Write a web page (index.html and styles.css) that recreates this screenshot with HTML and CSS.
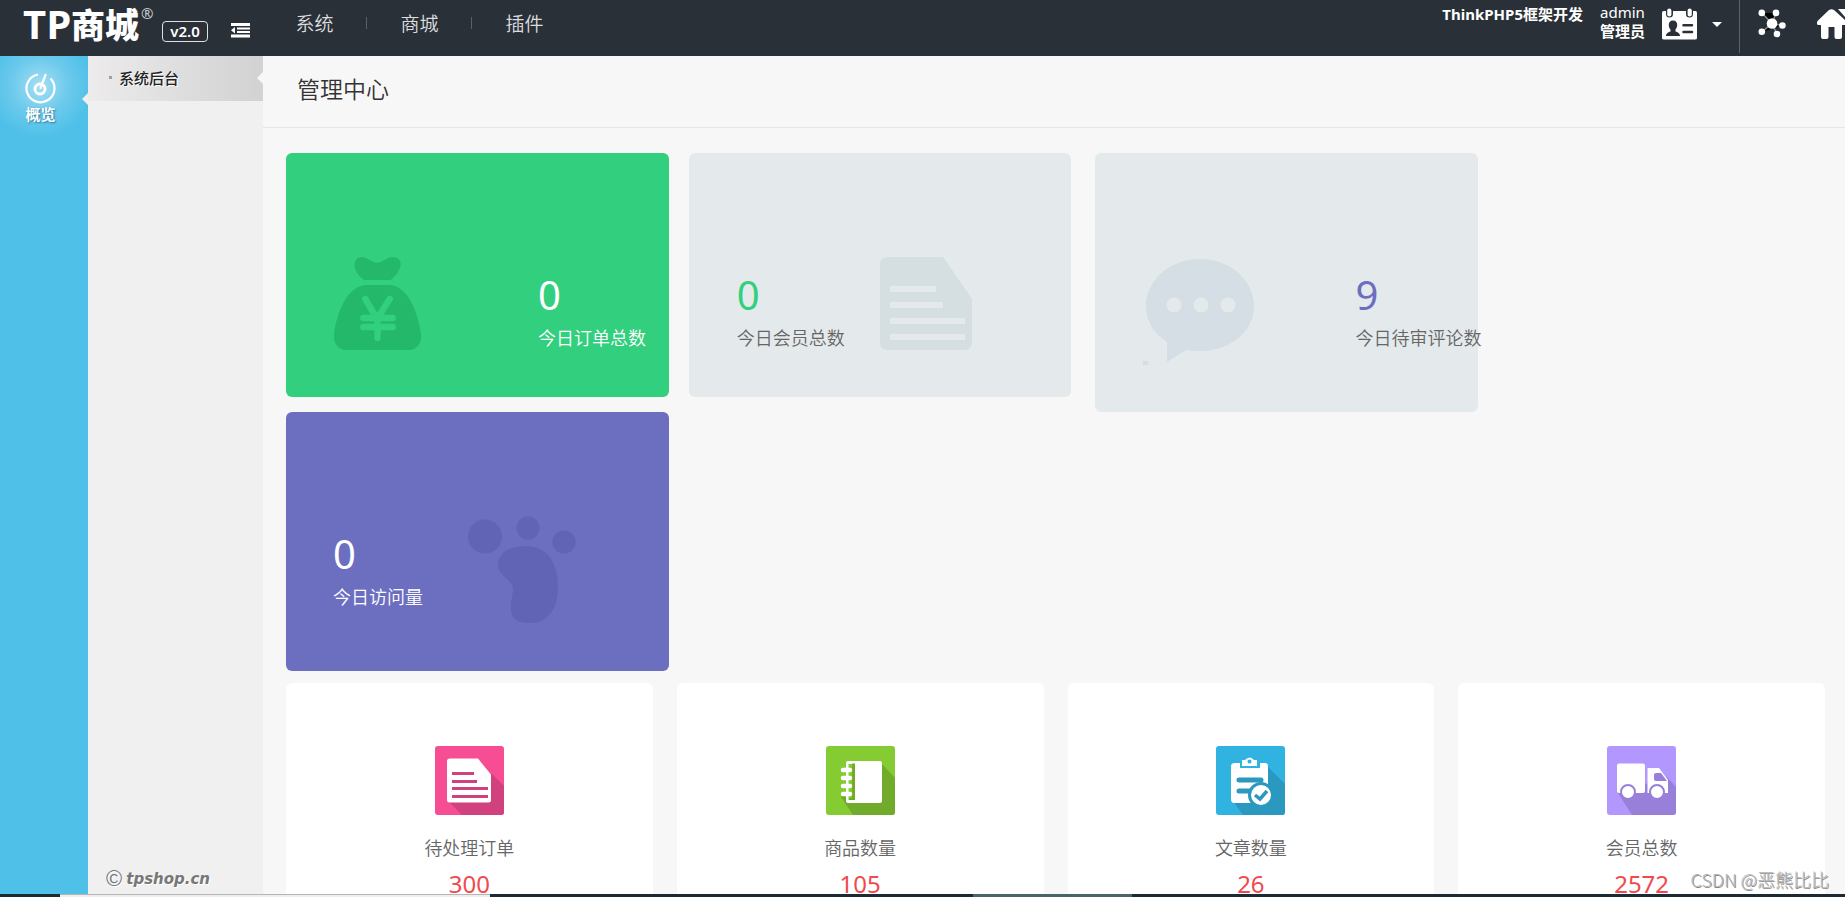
FILE: index.html
```html
<!DOCTYPE html>
<html lang="zh-CN">
<head>
<meta charset="utf-8">
<title>管理中心</title>
<link rel="stylesheet" href="styles.css">
</head>
<body>
<header class="topbar">
  <div class="brand">
    <span class="brand-tp">TP</span><span class="brand-cn">商城</span><span class="brand-reg">®</span>
    <span class="version">v2.0</span>
  </div>
  <button class="fold" type="button" aria-label="收起菜单">
    <svg width="19" height="15" viewBox="0 0 19 15" fill="#fff"><path d="M0 0h19v3H0zM6 4.500h13v2H6zM6 8h13v2H6zM0 11.500h19v3H0zM0 7.300 4 4v6.600z"/></svg>
  </button>
  <nav class="mainnav">
    <a href="#">系统</a><a href="#">商城</a><a href="#">插件</a>
  </nav>
  <div class="account">
    <strong class="framework">ThinkPHP5框架开发</strong>
    <div class="user"><span>admin</span><strong>管理员</strong></div>
    <button class="profile" type="button" aria-label="账户">
      <svg width="35" height="32" viewBox="0 0 35 32"><path fill="#fff" d="M1.500 3H4v3a3.500 3.500 0 0 0 7 0V3h13v3a3.500 3.500 0 0 0 7 0V3h2.500Q35 3 35 5v25q0 1.500-2 1.500H2Q0 31.500 0 30V5q0-2 1.500-2z"/><rect x="5.200" y="0.500" width="4.200" height="8" rx="2.100" fill="#fff"/><rect x="25.600" y="0.500" width="4.200" height="8" rx="2.100" fill="#fff"/><path fill="#2a3038" d="M11 12.500c3 0 4.500 2 4.200 5-.2 2-1 3-1.700 4v2c2 .8 4.500 1.500 4.500 4.500H4c0-3 2.500-3.700 4.500-4.500v-2c-.8-1-1.500-2-1.700-4-.3-3 1.200-5 4.200-5z"/><path stroke="#2a3038" stroke-width="2.500" stroke-linecap="round" d="M21.500 17.200h8.500M21.500 24h8.500"/></svg>
      <svg width="10" height="5" viewBox="0 0 10 5"><path fill="#fff" d="M0 0h10L5 5z"/></svg>
    </button>
  </div>
  <div class="tools">
    <button class="tool" type="button" aria-label="导航">
      <svg width="28" height="29" viewBox="0 0 28 29"><path stroke="#8d9298" stroke-width="1.300" d="M4 4l10 10.500L18 4M4 23l10-8.500 10 2M14 14.500 19 25"/><g fill="#fff"><circle cx="14" cy="14.500" r="5.300"/><circle cx="3.800" cy="3.900" r="3.300"/><circle cx="18" cy="3.900" r="3.300"/><circle cx="24.400" cy="16.500" r="3.300"/><circle cx="3.800" cy="22.800" r="3.300"/><circle cx="19" cy="25" r="3.300"/></g></svg>
    </button>
    <button class="tool" type="button" aria-label="首页">
      <svg width="30" height="31" viewBox="0 0 30 31" fill="#fff"><path d="M12 1q2.500-1.500 5 0l12 11q2 3-.5 4H25v12q0 2-2 2h-3.500q-2 0-2-2V18h-6v10q0 2-2 2H6q-2 0-2-2V16H1q-2-1-.5-4zM21 0h8v9z"/></svg>
    </button>
  </div>
</header>
<div class="workspace">
  <aside class="modules">
    <a class="module" href="#">
      <svg width="31" height="32" viewBox="0 0 31 32" fill="none" stroke="#fff"><path stroke-width="2.200" d="M13 2.500a14 14 0 1 0 12.500 4"/><circle cx="15" cy="17" r="5" stroke-width="2.800"/><path stroke-width="2.200" stroke-linecap="round" d="M15.500 16 20.500 3"/></svg>
      <span>概览</span>
    </a>
  </aside>
  <aside class="submenu">
    <a class="submenu-item" href="#">系统后台</a>
    <div class="copyright"><span class="copy-mark">©</span> <em>tpshop.cn</em></div>
  </aside>
  <main class="content">
    <h1 class="page-title">管理中心</h1>
    <div class="panel">
      <section class="stats">
        <article class="stat stat-orders">
          <div class="stat-lead">
            <svg width="88" height="94" viewBox="0 0 90 94" preserveAspectRatio="none"><g fill="#24b86b"><path d="M28 0c6 0 10 5 16 6 6-1 10-6 16-6 6 0 9 4 8 9-2 7-6 11-10 14H31c-5-3-9-8-10-14 0-5 2-9 7-9zM32 28h26c18 2 28 28 31 49 1 10-5 16-13 16H13C5 93-1 87 0 77 3 56 13 30 32 28z"/></g><path fill="none" stroke="#32cf7e" stroke-width="6.500" stroke-linecap="round" d="M32 42l12 20 13-20M44.500 60v21M30 61h30M30 70h30"/></svg>
          </div>
          <div class="stat-text"><b>0</b><span>今日订单总数</span></div>
        </article>
        <article class="stat stat-members">
          <div class="stat-lead stat-text"><b>0</b><span>今日会员总数</span></div>
          <svg width="92" height="94" viewBox="0 0 92 94"><path fill="#d5dee1" d="M8 0h55l29 42v43q0 8-8 8H8q-8 0-8-8V8q0-8 8-8z"/><path fill="#e4eaec" d="M10 29h46v6H10zM10 45h53v6H10zM10 61h75v6H10zM10 77h75v6H10z"/></svg>
        </article>
        <article class="stat stat-comments">
          <div class="stat-lead">
            <svg width="112" height="109" viewBox="0 0 112 109"><path fill="#d5dee4" d="M57 2c30 0 54 21 54 47S87 94 57 94q-7 0-14-1l-19 12V85C11 77 3 64 3 49 3 23 27 2 57 2zM0 104h5v4H0z"/><g fill="#e4eaec"><circle cx="31" cy="48" r="7.500"/><circle cx="58" cy="48" r="7.500"/><circle cx="85" cy="48" r="7.500"/></g></svg>
          </div>
          <div class="stat-text"><b>9</b><span>今日待审评论数</span></div>
        </article>
        <article class="stat stat-visits">
          <div class="stat-lead stat-text"><b>0</b><span>今日访问量</span></div>
          <svg width="109" height="109" viewBox="0 0 109 109" fill="#6163b5"><circle cx="17" cy="20.500" r="17"/><circle cx="60" cy="12" r="11.500"/><circle cx="96" cy="26" r="11.500"/><path d="M57 30c24 0 33 18 33 42 0 22-11 35-28 35-13 0-20-5-19-17 0-7 2-11 2-17 0-10-15-12-15-25 0-10 11-18 27-18z"/></svg>
        </article>
      </section>
      <section class="totals">
        <article class="total">
          <svg width="69" height="69" viewBox="0 0 69 69"><rect width="69" height="69" rx="3" fill="#f74d93"/><path fill="#d0417e" d="M14 56 56 27l13 13v26q0 3-3 3H27z"/><path fill="#fff" d="M15 12.500h28l13 16V54q0 2.500-2.500 2.500h-39Q12 56.500 12 54V15q0-2.500 3-2.500z"/><path fill="#d0417e" d="M17 26h22v3H17zM17 34h25v3H17zM17 41h36v3H17zM17 49h36v3H17z"/></svg>
          <span>待处理订单</span><b>300</b>
        </article>
        <article class="total">
          <svg width="69" height="69" viewBox="0 0 69 69"><rect width="69" height="69" rx="3" fill="#85cc33"/><path fill="#70ab2b" d="M15 51 56 18l13 14v34q0 3-3 3H27z"/><rect x="20" y="15" width="36" height="42" rx="2" fill="#fff"/><path fill="#85cc33" d="M22.500 18H29v36h-6.500z"/><path fill="#70ab2b" d="M26 17.500h3V54h-6v-2h3z"/><path stroke="#fff" stroke-width="4.500" stroke-linecap="round" d="M17 24h7M17 32h7M17 40h7M17 48h7"/></svg>
          <span>商品数量</span><b>105</b>
        </article>
        <article class="total">
          <svg width="69" height="69" viewBox="0 0 69 69"><rect width="69" height="69" rx="3" fill="#31b3e1"/><path fill="#2b98bf" d="M17 55 52 21l17 17v28q0 3-3 3H27z"/><path fill="#fff" d="M19 17h5v5h20v-5h5q3 0 3 3v33q0 4-3 4H18q-3 0-3-4V20q0-3 4-3zM26 14h3q5-5 9 0h3v6H26z"/><circle cx="33.500" cy="15.500" r="2" fill="#31b3e1"/><path stroke="#2b98bf" stroke-width="5" stroke-linecap="round" d="M23 34h22M23 45h11"/><circle cx="45" cy="49" r="11.500" fill="#fff" stroke="#2b98bf" stroke-width="3"/><path fill="none" stroke="#2b98bf" stroke-width="3.500" d="m39 49 5 4 7-8"/></svg>
          <span>文章数量</span><b>26</b>
        </article>
        <article class="total">
          <svg width="69" height="69" viewBox="0 0 69 69"><rect width="69" height="69" rx="3" fill="#b297ff"/><path fill="#9880da" d="M11 47 60 31l9 10v25q0 3-3 3H25z"/><rect x="10" y="17.500" width="28" height="29.500" rx="2" fill="#fff"/><path fill="#fff" d="M40.500 22H52l9 12v13H40.500z"/><path fill="#9880da" d="M49 27h5l6 8H49q-2 0-2-2v-4q0-2 2-2z"/><g fill="#fff" stroke="#9880da" stroke-width="2"><circle cx="21" cy="46" r="7"/><circle cx="50" cy="46" r="7"/></g></svg>
          <span>会员总数</span><b>2572</b>
        </article>
      </section>
    </div>
  </main>
</div>
<div class="taskbar"><div class="task"></div><div class="task-glow"></div></div>
<div class="watermark">CSDN @恶熊比比</div>
</body>
</html>
```
FILE: styles.css
```css
* { box-sizing: border-box; }

body {
  margin: 0;
  height: 100vh;
  display: flex;
  flex-direction: column;
  overflow: hidden;
  position: relative;
  background: #f7f7f7;
  color: #333;
  font-family: "Noto Sans", "Noto Sans CJK SC", sans-serif;
  font-size: 15px;
}

a { color: inherit; text-decoration: none; }
svg { display: block; flex: none; }
button { border: 0; padding: 0; background: none; color: inherit; font: inherit; }

.topbar {
  flex: none;
  display: flex;
  align-items: flex-start;
  height: 56px;
  background: #2a3038;
  color: #fff;
}

.brand {
  flex: none;
  display: flex;
  width: 208px;
  padding-left: 23px;
  line-height: 48px;
  white-space: nowrap;
  font-weight: 700;
}
.brand-tp { width: 48px; font-family: "Open Sans", sans-serif; font-size: 40px; font-weight: 700; }
.brand-cn { width: 70px; font-family: "Noto Sans CJK SC", sans-serif; font-size: 34px; font-weight: 900; }
.brand-reg { width: 21px; font-size: 15px; font-weight: 400; line-height: 26px; color: #c5c9cd; }
.version {
  flex: none;
  width: 46px;
  height: 21px;
  margin-top: 21px;
  border: 1px solid #dfe1e3;
  border-radius: 4px;
  text-align: center;
  font-size: 15px;
  font-weight: 600;
  line-height: 18px;
}

.fold { flex: none; margin: 23px 0 0 23px; }

.mainnav { flex: none; display: flex; margin-left: 12px; }
.mainnav a {
  width: 105px;
  padding-top: 8px;
  text-align: center;
  font-size: 19px;
  font-weight: 350;
  line-height: 32px;
  color: #dcdddf;
  background: linear-gradient(#5b6067, #5b6067) right 17px / 1px 12px no-repeat;
}
.mainnav a:last-child { background: none; }

.account { display: flex; margin-left: auto; padding-right: 17px; line-height: 19px; white-space: nowrap; }
.framework { margin: 5px 17px 0 0; }
.user { display: flex; flex-direction: column; width: 62px; padding-top: 3px; }
.profile { display: flex; align-items: center; gap: 15px; margin-top: 7px; }

.tools { flex: none; display: flex; gap: 31px; height: 53px; width: 106px; padding: 9px 0 0 18px; border-left: 1px solid #5d6269; }
.tool { display: flex; align-items: flex-start; flex: none; }

.workspace { flex: 1; min-height: 0; display: flex; }

.modules { flex: none; width: 88px; background: #4fc0e8; }
.module {
  position: relative;
  display: flex;
  flex-direction: column;
  align-items: center;
  height: 88px;
  padding: 16px 7px 0 0;
  background: radial-gradient(circle at 40px 30px, #a5dff3 0, #6dcaec 28px, #4fc0e8 52px);
  color: #fff;
  font-weight: 700;
  line-height: 20px;
  text-shadow: 1px 1px 2px #26799c;
}
.module::after,
.submenu-item::after {
  content: "";
  position: absolute;
  right: 0;
  border: 6px solid transparent;
  border-left: 0;
  border-right-color: #f0f0f0;
}
.module::after { top: 37px; }

.submenu { flex: none; display: flex; flex-direction: column; justify-content: space-between; width: 175px; background: #f0f0f0; }
.submenu-item {
  position: relative;
  display: flex;
  align-items: center;
  gap: 7px;
  height: 45px;
  padding: 0 0 2px 21px;
  background: linear-gradient(90deg, #edebec, #d2d2d2);
  color: #222;
  font-weight: 500;
  text-shadow: 1px 1px 0 #fff;
}
.submenu-item::before { content: ""; width: 3px; height: 3px; background: #a0a0a0; }
.submenu-item::after { top: 16px; border-right-color: #f7f7f7; }

.copyright {
  display: flex;
  align-items: center;
  gap: 4px;
  padding: 0 0 5px 18px;
  line-height: 20px;
  color: #777;
  font-family: "DejaVu Sans", sans-serif;
  font-size: 15px;
  font-weight: 700;
  text-shadow: 1px 1px 0 #fff;
}
.copy-mark { font-family: "Liberation Sans", sans-serif; font-size: 22px; font-weight: 400; }

.content { flex: 1; min-width: 0; overflow: hidden; }
.page-title {
  margin: 0;
  height: 72px;
  padding-left: 34px;
  border-bottom: 1px solid #e6e6e6;
  font-size: 23px;
  font-weight: 350;
  line-height: 66px;
}

.panel { padding: 25px 20px 0 23px; }

.stats { display: flex; flex-wrap: wrap; align-items: flex-start; }
.stat {
  display: flex;
  width: 24.87%;
  padding: 104px 0 46px 48px;
  border-radius: 6px;
  background: #e4eaec;
  color: #666;
  white-space: nowrap;
}
.stat-lead { flex: none; }
.stat-text { display: flex; flex-direction: column; height: 94px; padding-top: 8px; }
.stat-text b { font-size: 40px; font-weight: 400; line-height: 60px; }
.stat-text span { font-size: 18px; font-weight: 350; line-height: 26px; }

.stat-orders { margin-right: 20px; background: #32cf7e; color: #fff; }
.stat-orders .stat-lead { width: 204px; }
.stat-members { margin-right: 24px; }
.stat-members .stat-lead { width: 143px; }
.stat-members b { color: #32cf7e; }
.stat-comments .stat-lead { width: 212px; }
.stat-comments b { color: #6c6ebf; }
.stat-visits { padding-left: 47px; background: #6c6ebf; color: #fff; }
.stat-visits .stat-lead { width: 135px; }

.totals { display: grid; grid-template-columns: repeat(4, 1fr); gap: 24px; margin-top: 12px; }
.total {
  display: flex;
  flex-direction: column;
  align-items: center;
  padding: 63px 0 30px;
  border-radius: 6px;
  background: #fff;
}
.total span { margin-top: 17px; font-size: 18px; font-weight: 350; line-height: 32px; color: #666; }
.total b { font-size: 24px; font-weight: 400; line-height: 40px; color: #f04a4f; }

.taskbar { flex: none; display: flex; height: 3px; background: #1c2b33; }
.task { width: 430px; margin-left: 60px; background: #eee; border-top: 1px solid #b5b5b5; }
.task-glow { width: 159px; margin-left: 483px; background: #4b6468; }

.watermark {
  position: absolute;
  right: 16px;
  bottom: 6px;
  color: #b4b4b4;
  font-family: "Noto Sans CJK SC", sans-serif;
  font-size: 18px;
  font-weight: 300;
  line-height: 24px;
  text-shadow: 1px 1px 0 #8c8c8c;
}
```
